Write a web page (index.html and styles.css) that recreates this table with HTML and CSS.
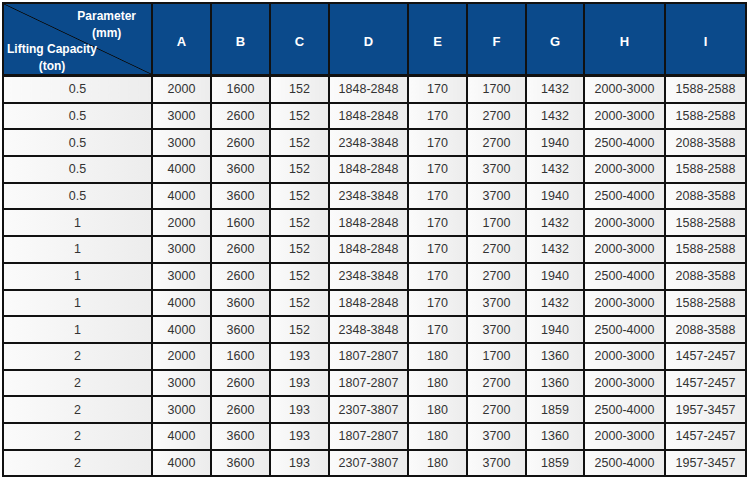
FILE: index.html
```html
<!DOCTYPE html>
<html>
<head>
<meta charset="utf-8">
<link rel="stylesheet" href="styles.css">
</head>
<body>
<table class="spec">
<colgroup>
<col class="c0"><col class="c1"><col class="c1"><col class="c1"><col class="c2"><col class="c1"><col class="c1"><col class="c3"><col class="c4"><col class="c4">
</colgroup>
<thead>
<tr>
<th class="corner">
<div class="corner-in">
<div class="param">Parameter<br>(mm)</div>
<div class="cap">Lifting Capacity<br>(ton)</div>
</div>
</th>
<th>A</th><th>B</th><th>C</th><th>D</th><th>E</th><th>F</th><th>G</th><th>H</th><th>I</th>
</tr>
</thead>
<tbody>
<tr><td>0.5</td><td>2000</td><td>1600</td><td>152</td><td>1848-2848</td><td>170</td><td>1700</td><td>1432</td><td>2000-3000</td><td>1588-2588</td></tr>
<tr><td>0.5</td><td>3000</td><td>2600</td><td>152</td><td>1848-2848</td><td>170</td><td>2700</td><td>1432</td><td>2000-3000</td><td>1588-2588</td></tr>
<tr><td>0.5</td><td>3000</td><td>2600</td><td>152</td><td>2348-3848</td><td>170</td><td>2700</td><td>1940</td><td>2500-4000</td><td>2088-3588</td></tr>
<tr><td>0.5</td><td>4000</td><td>3600</td><td>152</td><td>1848-2848</td><td>170</td><td>3700</td><td>1432</td><td>2000-3000</td><td>1588-2588</td></tr>
<tr><td>0.5</td><td>4000</td><td>3600</td><td>152</td><td>2348-3848</td><td>170</td><td>3700</td><td>1940</td><td>2500-4000</td><td>2088-3588</td></tr>
<tr><td>1</td><td>2000</td><td>1600</td><td>152</td><td>1848-2848</td><td>170</td><td>1700</td><td>1432</td><td>2000-3000</td><td>1588-2588</td></tr>
<tr><td>1</td><td>3000</td><td>2600</td><td>152</td><td>1848-2848</td><td>170</td><td>2700</td><td>1432</td><td>2000-3000</td><td>1588-2588</td></tr>
<tr><td>1</td><td>3000</td><td>2600</td><td>152</td><td>2348-3848</td><td>170</td><td>2700</td><td>1940</td><td>2500-4000</td><td>2088-3588</td></tr>
<tr><td>1</td><td>4000</td><td>3600</td><td>152</td><td>1848-2848</td><td>170</td><td>3700</td><td>1432</td><td>2000-3000</td><td>1588-2588</td></tr>
<tr><td>1</td><td>4000</td><td>3600</td><td>152</td><td>2348-3848</td><td>170</td><td>3700</td><td>1940</td><td>2500-4000</td><td>2088-3588</td></tr>
<tr><td>2</td><td>2000</td><td>1600</td><td>193</td><td>1807-2807</td><td>180</td><td>1700</td><td>1360</td><td>2000-3000</td><td>1457-2457</td></tr>
<tr><td>2</td><td>3000</td><td>2600</td><td>193</td><td>1807-2807</td><td>180</td><td>2700</td><td>1360</td><td>2000-3000</td><td>1457-2457</td></tr>
<tr><td>2</td><td>3000</td><td>2600</td><td>193</td><td>2307-3807</td><td>180</td><td>2700</td><td>1859</td><td>2500-4000</td><td>1957-3457</td></tr>
<tr><td>2</td><td>4000</td><td>3600</td><td>193</td><td>1807-2807</td><td>180</td><td>3700</td><td>1360</td><td>2000-3000</td><td>1457-2457</td></tr>
<tr><td>2</td><td>4000</td><td>3600</td><td>193</td><td>2307-3807</td><td>180</td><td>3700</td><td>1859</td><td>2500-4000</td><td>1957-3457</td></tr>
</tbody>
</table>
</body>
</html>
```
FILE: styles.css
```css
html, body {
  margin: 0;
  padding: 0;
  background: #ffffff;
}
body {
  padding: 2px 3px 0 2px;
  font-family: "Liberation Sans", Arial, sans-serif;
}
.spec {
  border-collapse: collapse;
  table-layout: fixed;
  width: 745px;
  border: 2px solid #111;
}
.c0 { width: 149px; }
.c1 { width: 59px; }
.c2 { width: 79px; }
.c3 { width: 58px; }
.c4 { width: 81px; }
.spec th, .spec td {
  border: 2px solid #111;
  padding: 0;
  text-align: center;
}
.spec th {
  background: #0b4a8b;
  color: #fff;
  font-weight: bold;
  font-size: 13px;
  height: 62px;
  padding-top: 5px;
  border-bottom-width: 3px;
}
.spec th.corner {
  padding: 0;
  vertical-align: top;
  background:
    linear-gradient(to top right, transparent calc(50% - 0.8px), #0a0a0a 50%, transparent calc(50% + 0.8px)),
    #0b4a8b;
}
.corner-in {
  display: flex;
  flex-direction: column;
  font-size: 12px;
  line-height: 16.5px;
  padding: 4px 0 0 0;
}
.param {
  align-self: flex-end;
  text-align: center;
  padding-right: 15px;
}
.cap {
  align-self: flex-start;
  text-align: center;
  padding-left: 3px;
}
.spec td {
  height: 24.7px;
  font-size: 12.5px;
  color: #333;
  background: linear-gradient(to right, #fbfbfb, #ececec);
}
```
